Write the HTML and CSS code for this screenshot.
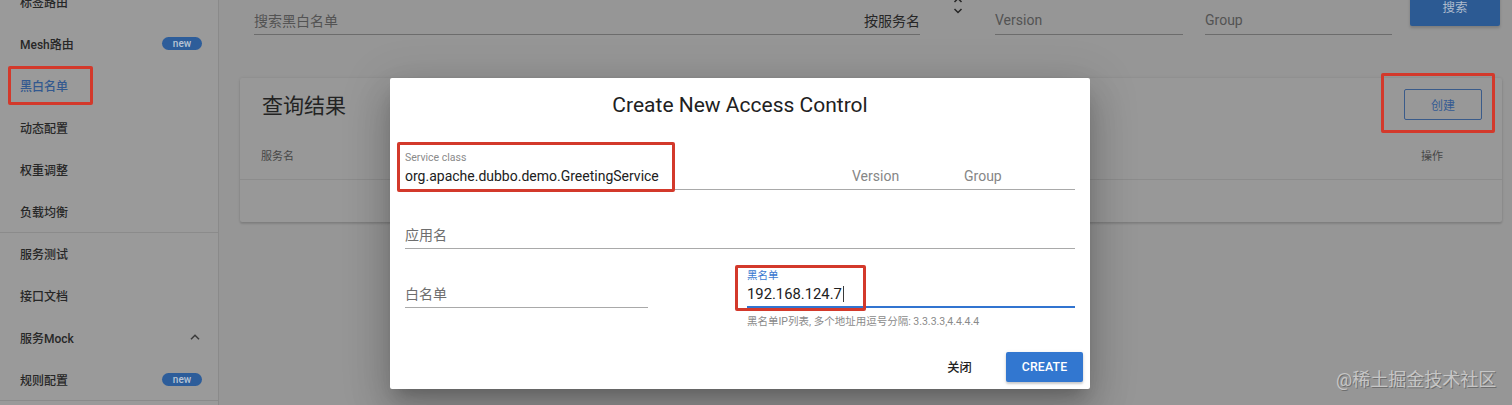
FILE: index.html
```html
<!DOCTYPE html>
<html lang="zh-CN">
<head>
<meta charset="utf-8">
<title>黑白名单</title>
<link rel="stylesheet" href="styles.css">
</head>
<body>
<div class="app">
  <aside class="sidebar">
    <ul class="nav">
      <li class="nav-item">标签路由</li>
      <li class="nav-item">Mesh路由<span class="badge">new</span></li>
      <li class="nav-item active">黑白名单<span class="mark mark-nav"></span></li>
      <li class="nav-item">动态配置</li>
      <li class="nav-item">权重调整</li>
      <li class="nav-item">负载均衡</li>
      <li class="nav-divider"></li>
      <li class="nav-item">服务测试</li>
      <li class="nav-item">接口文档</li>
      <li class="nav-item">服务Mock<svg class="chev" viewBox="0 0 10 6"><polyline points="1,5.2 5,1.2 9,5.2" fill="none" stroke="#3a3a3a" stroke-width="1.5"/></svg></li>
      <li class="nav-item">规则配置<span class="badge">new</span></li>
      <li class="nav-divider"></li>
    </ul>
  </aside>
  <main class="content">
    <div class="toolbar">
      <div class="tf tf-search"><span class="ph">搜索黑白名单</span><span class="sel">按服务名</span></div>
      <svg class="sort-icon" viewBox="0 0 10 18"><polyline points="1.5,6 5,2.5 8.5,6" fill="none" stroke="#262626" stroke-width="1.5"/><polyline points="1.5,13 5,16.5 8.5,13" fill="none" stroke="#262626" stroke-width="1.5"/></svg>
      <div class="tf tf-version"><span class="ph">Version</span></div>
      <div class="tf tf-group"><span class="ph">Group</span></div>
      <div class="btn-search">搜索</div>
    </div>
    <section class="card">
      <div class="card-head">
        <div class="card-title">查询结果</div>
        <div class="btn-wrap">
          <div class="btn-create">创建</div>
          <span class="mark mark-create"></span>
        </div>
      </div>
      <div class="thead"><span>服务名</span><span>操作</span></div>
    </section>
  </main>
</div>

<div class="dialog">
  <div class="dlg-title">Create New Access Control</div>
  <div class="dlg-body">
    <div class="row row-line">
      <div class="field f-service">
        <div class="f-label">Service class</div>
        <div class="f-input">org.apache.dubbo.demo.GreetingService</div>
        <span class="mark mark-service"></span>
      </div>
      <div class="field f-version">
        <div class="f-label"></div>
        <div class="f-input ph2">Version</div>
      </div>
      <div class="field f-grp">
        <div class="f-label"></div>
        <div class="f-input ph2">Group</div>
      </div>
    </div>
    <div class="row gap">
      <div class="field f-app line">
        <div class="f-label"></div>
        <div class="f-input ph3">应用名</div>
      </div>
    </div>
    <div class="row gap top">
      <div class="field f-white line">
        <div class="f-label"></div>
        <div class="f-input ph3">白名单</div>
      </div>
      <div class="f-black-col">
        <div class="field f-black focused">
          <div class="f-label blue">黑名单</div>
          <div class="f-input">192.168.124.7<span class="caret"></span></div>
          <span class="mark mark-black"></span>
        </div>
        <div class="hint">黑名单IP列表, 多个地址用逗号分隔: 3.3.3.3,4.4.4.4</div>
      </div>
    </div>
  </div>
  <div class="dlg-actions">
    <div class="btn-flat">关闭</div>
    <div class="btn-primary">CREATE</div>
  </div>
</div>

<div class="watermark">@稀土掘金技术社区</div>
</body>
</html>
```

FILE: styles.css
```css
* { box-sizing: border-box; }
html, body { margin: 0; padding: 0; }
body {
  width: 1512px;
  height: 405px;
  overflow: hidden;
  position: relative;
  background: #969696;
  font-family: Roboto, "Noto Sans CJK SC", sans-serif;
  color: #262626;
}
.app { display: flex; height: 405px; }

/* sidebar */
.sidebar {
  width: 219px;
  flex: none;
  background: #9a9a9a;
  border-right: 1px solid #8a8a8a;
  overflow: hidden;
}
.nav { list-style: none; margin: -20px 0 0; padding: 0; }
.nav-item {
  position: relative;
  height: 42px;
  display: flex;
  align-items: center;
  justify-content: space-between;
  padding: 0 16px 0 20px;
  font-size: 12px;
  font-weight: 500;
  color: #272727;
}
.nav-item.active { color: #33598f; }
.nav-divider { height: 1px; background: #8b8b8b; margin-bottom: -1px; }
.badge {
  width: 40px;
  height: 13px;
  border-radius: 7px;
  background: #2d5d9a;
  color: #b8c4d4;
  font-size: 10px;
  line-height: 13px;
  text-align: center;
  font-weight: 500;
}
.chev { width: 10px; height: 6px; margin-right: 2px; }

.mark {
  position: absolute;
  border: 3px solid #d3392b;
  border-radius: 2px;
  pointer-events: none;
}
.mark-nav { left: 8px; top: 2px; width: 85px; height: 39px; }

/* main */
.content { flex: 1; min-width: 0; }
.toolbar { display: flex; align-items: flex-start; height: 56px; padding-left: 35px; }
.tf {
  margin-top: 6px;
  height: 29px;
  border-bottom: 1px solid #6c6c6c;
  display: flex;
  align-items: center;
  padding-bottom: 1px;
  font-size: 14px;
}
.tf-search { width: 666px; justify-content: space-between; }
.ph { color: #535353; }
.sel { color: #262626; }
.sort-icon { flex: none; width: 10px; height: 18px; margin: -4px 0 0 33px; }
.tf-version { width: 188px; margin-left: 32px; }
.tf-group { width: 187px; margin-left: 22px; }
.btn-search {
  margin: -6px 0 0 18px;
  width: 90px;
  height: 32px;
  padding-bottom: 8px;
  background: #2c5a93;
  color: #aebbcd;
  font-size: 12.5px;
  border-radius: 2px;
  display: flex;
  align-items: center;
  justify-content: center;
  box-shadow: 0 2px 3px rgba(0,0,0,.18);
}

.card {
  margin: 22px 10px 0 21px;
  height: 144px;
  background: #989898;
  border-radius: 2px;
  box-shadow: 0 2px 2px rgba(0,0,0,.12), 0 0 3px rgba(0,0,0,.1);
}
.card-head {
  height: 52px;
  display: flex;
  align-items: center;
  justify-content: space-between;
  padding: 0 20px 0 22px;
}
.card-title { font-size: 21px; color: #232323; }
.btn-wrap { position: relative; }
.btn-create {
  width: 78px;
  height: 31px;
  border: 1px solid #3a5b8a;
  border-radius: 2px;
  color: #355b93;
  font-size: 12px;
  display: flex;
  align-items: center;
  justify-content: center;
}
.mark-create { left: -23px; top: -16px; width: 114px; height: 60px; }
.thead {
  height: 50px;
  display: flex;
  align-items: center;
  justify-content: space-between;
  padding: 0 59px 0 21px;
  font-size: 11px;
  color: #464646;
  border-bottom: 1px solid #8c8c8c;
}

/* dialog */
.dialog {
  position: absolute;
  left: 390px;
  top: 78px;
  width: 700px;
  height: 311px;
  background: #fff;
  border-radius: 2px;
  display: flex;
  flex-direction: column;
  box-shadow: 0 11px 15px -7px rgba(0,0,0,.2), 0 24px 38px 3px rgba(0,0,0,.14), 0 9px 46px 8px rgba(0,0,0,.12);
}
.dlg-title {
  height: 54px;
  line-height: 54px;
  text-align: center;
  font-size: 21px;
  color: #212121;
}
.dlg-body { padding: 19px 15px 0; }
.row { display: flex; }
.row.top { align-items: flex-start; }
.row.gap { margin-top: 20px; }
.row-line { border-bottom: 1px solid #a9a9a9; }
.field { position: relative; }
.line { border-bottom: 1px solid #a9a9a9; }
.f-label { height: 14px; line-height: 14px; font-size: 10.5px; color: #8a8a8a; }
.f-label.blue { color: #3a78cf; }
.f-input { height: 22px; line-height: 22px; font-size: 14px; color: #212121; margin-bottom: 2px; white-space: nowrap; }
.ph2 { color: #868686; }
.ph3 { color: #6e6e6e; }
.f-service { flex: 1; }
.f-version { width: 112px; }
.f-grp { width: 111px; }
.f-app { flex: 1; }
.f-white { width: 243px; }
.f-black-col { flex: 1; margin-left: 99px; }
.f-black { border-bottom: 2px solid #3174d0; }
.f-black .f-input { font-size: 14.8px; margin-bottom: 1px; }
.caret { display: inline-block; width: 1px; height: 16px; background: #3a3a3a; vertical-align: middle; margin-left: 1px; margin-top: -2px; }
.mark-service { left: -8px; top: -9px; width: 278px; height: 50px; }
.mark-black { left: -12px; top: -4px; width: 131px; height: 46px; }
.hint { margin-top: 7px; line-height: 14px; font-size: 10.5px; color: #8a8a8a; }

.dlg-actions {
  margin-top: auto;
  display: flex;
  justify-content: flex-end;
  gap: 8px;
  padding: 0 7px 7px 0;
}
.btn-flat, .btn-primary {
  width: 77px;
  height: 30px;
  display: flex;
  align-items: center;
  justify-content: center;
  font-size: 12.25px;
  font-weight: 500;
  border-radius: 2px;
}
.btn-flat { color: #222; }
.btn-primary {
  background: #3277d0;
  color: #fff;
  letter-spacing: .2px;
  box-shadow: 0 2px 2px rgba(0,0,0,.14), 0 1px 4px rgba(0,0,0,.12);
}

.watermark {
  position: absolute;
  left: 1336px;
  top: 370px;
  line-height: 20px;
  font-size: 18px;
  color: #c6c6c6;
  text-shadow: 1px 1px 0 #6e6e6e;
  white-space: nowrap;
}
```
